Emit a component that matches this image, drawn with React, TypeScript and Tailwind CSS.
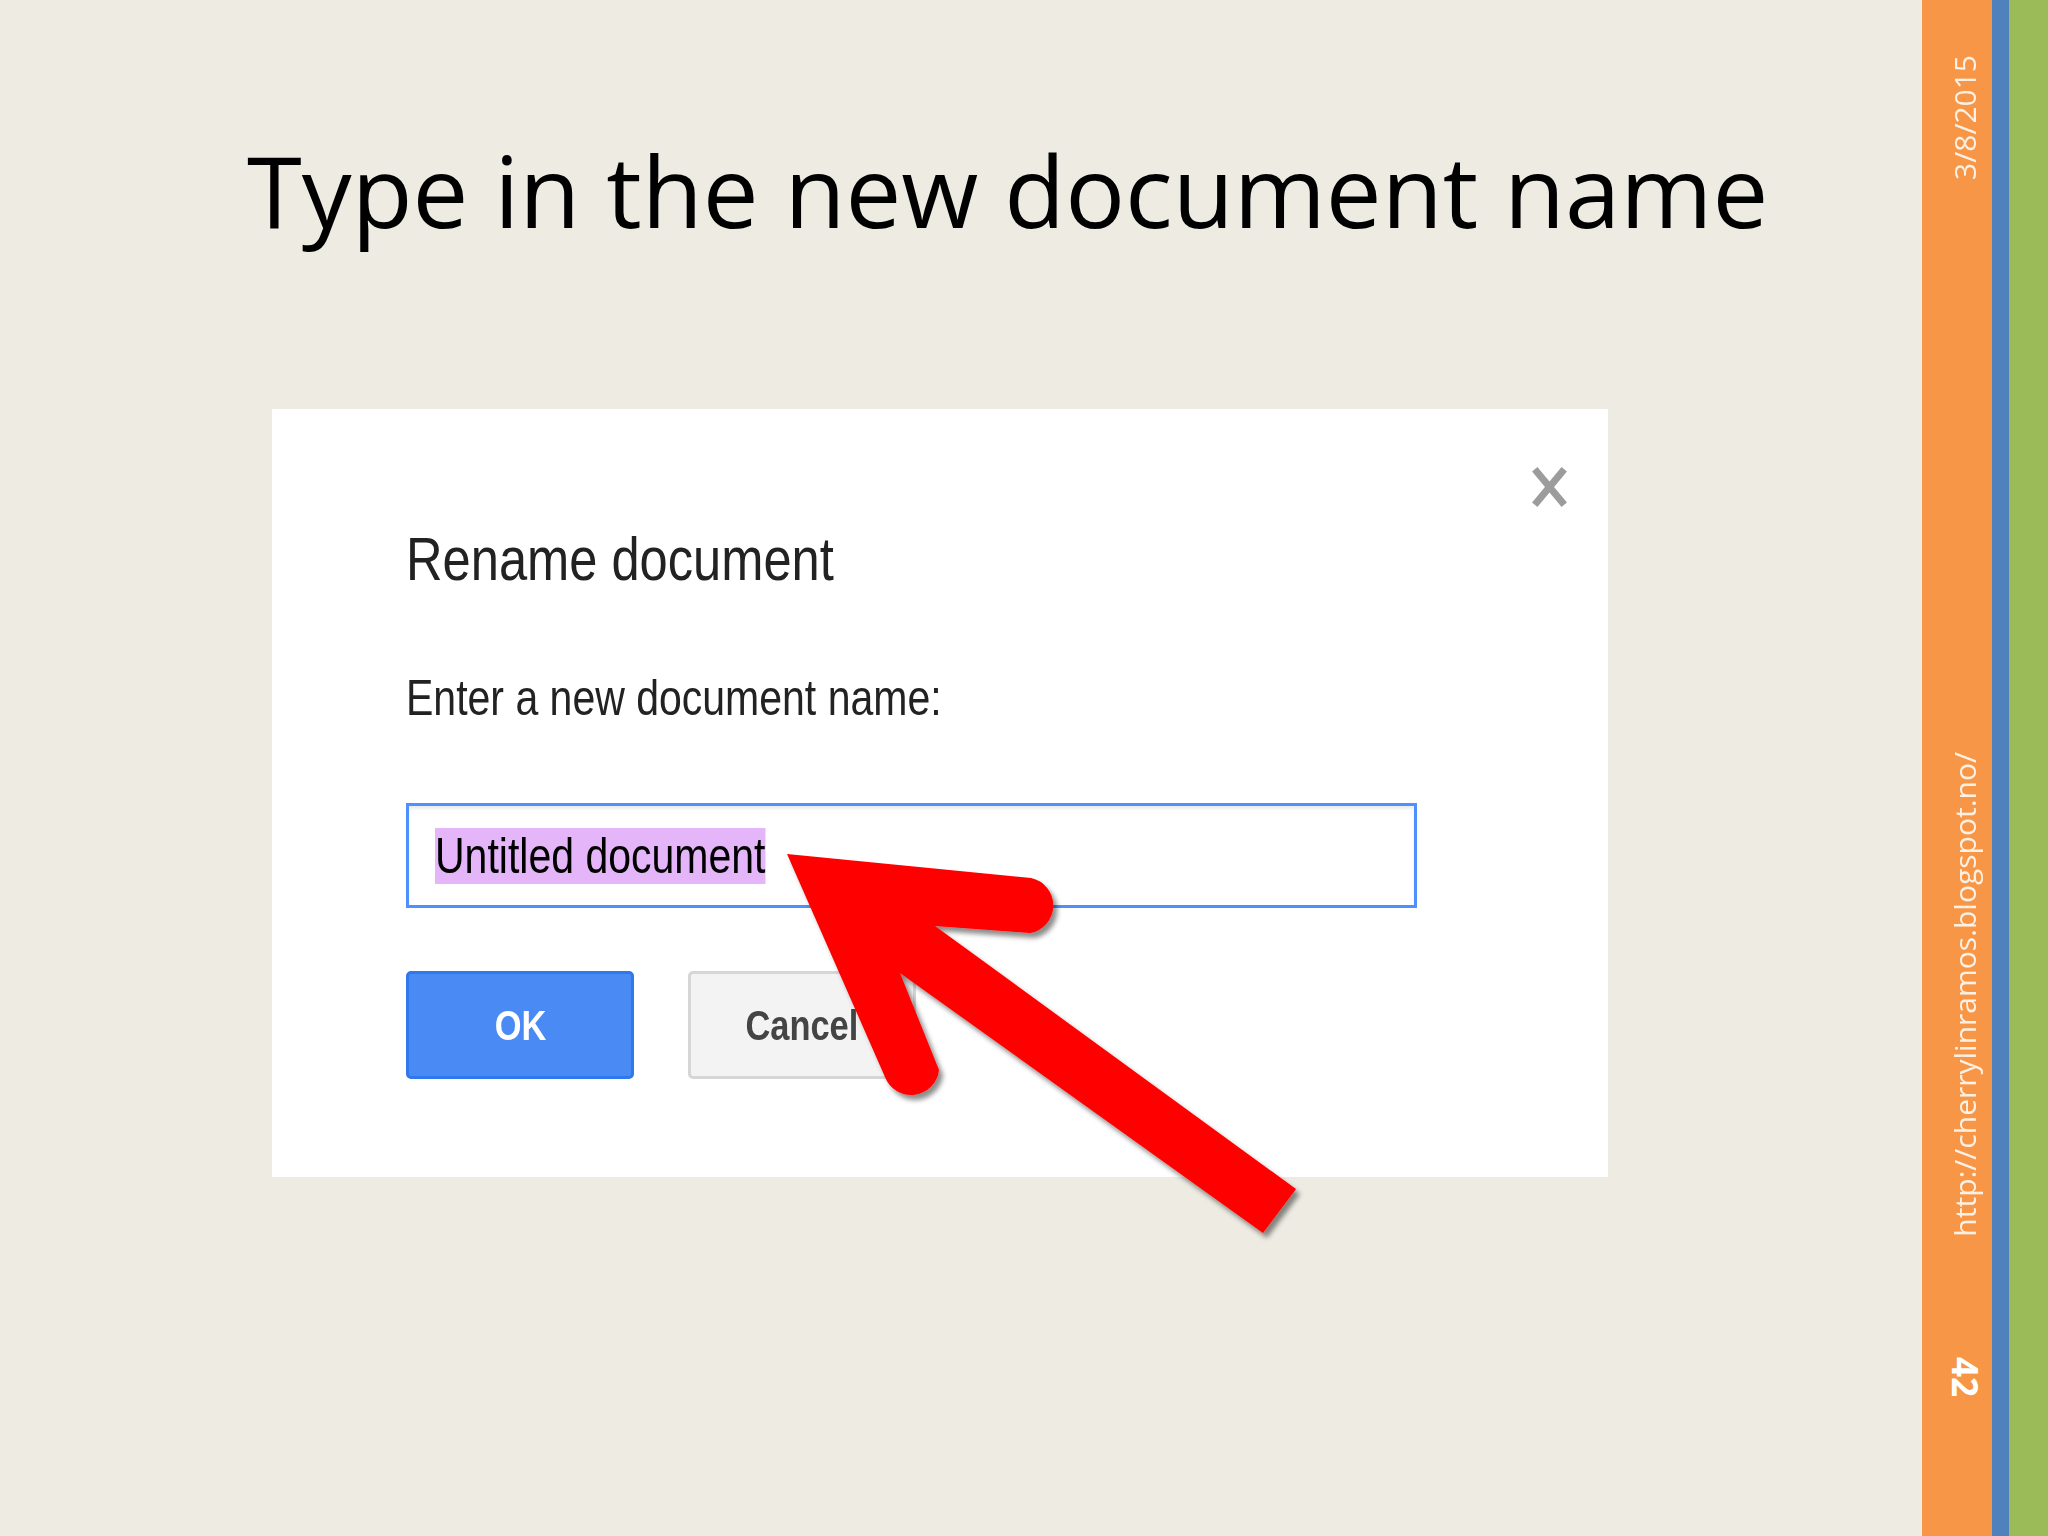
const ArrowOverlay = () => (
  <svg
    className="pointer-events-none absolute left-0 top-0"
    width="2048"
    height="1536"
    viewBox="0 0 2048 1536"
  >
    <defs>
      <filter id="arrowShadow" x="-10%" y="-10%" width="130%" height="130%">
        <feDropShadow dx="4" dy="5" stdDeviation="2.5" floodColor="#000" floodOpacity="0.45" />
      </filter>
    </defs>
    <path
      d="M787 854 L1031 878 A28 28 0 0 1 1030 933 L935 926 L1296 1189 L1263 1233 L900 973 L939 1070 A28 28 0 0 1 885 1077 Z"
      fill="#ff0000"
      filter="url(#arrowShadow)"
    />
  </svg>
);

const CloseIcon = () => (
  <svg width="35" height="40" viewBox="0 0 35 40">
    <path d="M5 5 L30 35 M30 5 L5 35" stroke="#9c9c9c" strokeWidth="7" strokeLinecap="square" />
  </svg>
);

const RenameDialog = () => {
  return (
    <div className="ml-[272px] mt-[170px] flex h-[768px] w-[1336px] flex-col bg-white pt-[58px] font-['Liberation_Sans',Arial,sans-serif] text-[#222]">
      <div className="flex justify-end pr-[41px]">
        <CloseIcon />
      </div>

      <div className="ml-[134px] mt-[18px] flex flex-col items-start">
        <h2 className="origin-left scale-x-[0.83] text-[61px] leading-[68px] font-normal">Rename document</h2>
        <p className="mt-[77px] origin-left scale-x-[0.82] text-[50px] leading-[56px]">Enter a new document name:</p>

        <div className="mt-[77px] flex h-[105px] w-[1011px] items-center border-[3px] border-[#4d90fe] pl-[26px] shadow-[inset_0_3px_3px_rgba(0,0,0,0.08)]">
          <span className="inline-block origin-left scale-x-[0.82] bg-[#e5b5f9] text-[50px] leading-[56px] text-black">
            Untitled document
          </span>
        </div>

        <div className="mt-[63px] flex gap-[54px]">
          <button className="flex h-[108px] w-[228px] items-center justify-center rounded-[5px] border-[3px] border-[#3079ed] bg-[#4a8af4] text-[42px] font-bold text-white">
            <span className="scale-x-[0.82]">OK</span>
          </button>
          <button className="flex h-[108px] w-[228px] items-center justify-center rounded-[5px] border-[3px] border-[#d6d6d6] bg-[#f3f3f3] text-[42px] font-bold text-[#444]">
            <span className="scale-x-[0.82]">Cancel</span>
          </button>
        </div>
      </div>
    </div>
  );
};

const SideBar = () => {
  return (
    <div className="flex h-full">
      <div className="flex w-[70px] flex-col items-center bg-[#f79646] pl-[16px] font-['Open_Sans',sans-serif] text-[#fdf0e4]">
        <div className="flex h-[180px] items-end">
          <span className="rotate-180 text-[30px] leading-[30px] [writing-mode:vertical-rl]">3/8/2015</span>
        </div>
        <div className="flex h-[1057px] items-end">
          <span className="rotate-180 text-[30px] leading-[30px] [writing-mode:vertical-rl]">
            http://cherrylinramos.blogspot.no/
          </span>
        </div>
        <span className="mt-[120px] text-[35px] leading-[35px] font-bold text-white [writing-mode:vertical-rl]">42</span>
      </div>
      <div className="w-[17px] bg-[#4f81bd]"></div>
      <div className="w-[39px] bg-[#9bbb59]"></div>
    </div>
  );
};

const App = () => {
  return (
    <section className="relative flex h-[1536px] w-[2048px] overflow-hidden bg-[#eeebe3]">
      <div className="flex flex-1 flex-col pt-[141px]">
        <h1 className="pl-[247px] font-['Open_Sans',sans-serif] text-[99.5px] leading-[98px] font-normal text-black">
          Type in the new document name
        </h1>
        <RenameDialog />
      </div>
      <SideBar />
      <ArrowOverlay />
    </section>
  );
};

export default App;
